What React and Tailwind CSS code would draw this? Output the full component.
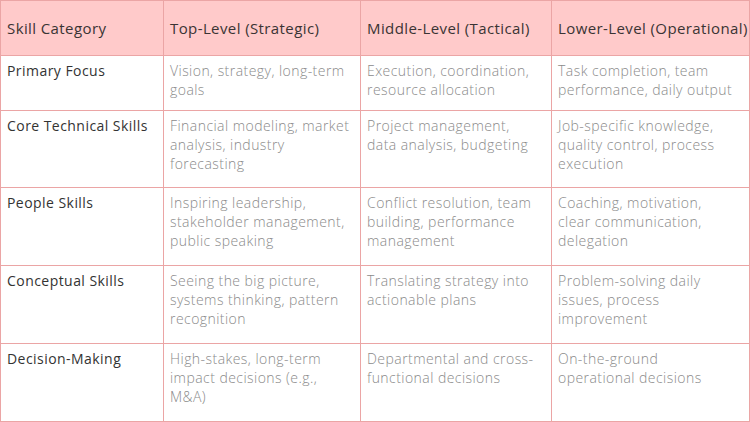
import React from "react";

const rows = [
  {
    h: "h-[55px]",
    cells: [
      ["Primary Focus"],
      ["Vision, strategy, long-term", "goals"],
      ["Execution, coordination,", "resource allocation"],
      ["Task completion, team", "performance, daily output"],
    ],
  },
  {
    h: "h-[77px]",
    cells: [
      ["Core Technical Skills"],
      ["Financial modeling, market", "analysis, industry", "forecasting"],
      ["Project management,", "data analysis, budgeting"],
      ["Job-specific knowledge,", "quality control, process", "execution"],
    ],
  },
  {
    h: "h-[78px]",
    cells: [
      ["People Skills"],
      ["Inspiring leadership,", "stakeholder management,", "public speaking"],
      ["Conflict resolution, team", "building, performance", "management"],
      ["Coaching, motivation,", "clear communication,", "delegation"],
    ],
  },
  {
    h: "h-[78px]",
    cells: [
      ["Conceptual Skills"],
      ["Seeing the big picture,", "systems thinking, pattern", "recognition"],
      ["Translating strategy into", "actionable plans"],
      ["Problem-solving daily", "issues, process", "improvement"],
    ],
  },
  {
    h: "h-[78px]",
    cells: [
      ["Decision-Making"],
      ["High-stakes, long-term", "impact decisions (e.g.,", "M&A)"],
      ["Departmental and cross-", "functional decisions"],
      ["On-the-ground", "operational decisions"],
    ],
  },
];

const headers = [
  "Skill Category",
  "Top-Level (Strategic)",
  "Middle-Level (Tactical)",
  "Lower-Level (Operational)",
];

export default function App() {
  return (
    <div className="w-[750px] h-[422px] bg-white overflow-hidden" style={{ fontFamily: '"Open Sans", "Noto Sans", sans-serif' }}>
      <table className="table-fixed border-collapse w-[749px]">
        <colgroup>
          <col className="w-[163px]" />
          <col className="w-[197px]" />
          <col className="w-[191px]" />
          <col className="w-[198px]" />
        </colgroup>
        <thead>
          <tr className="h-[55px] bg-[#ffcaca]">
            {headers.map((t) => (
              <th
                key={t}
                className="border border-[#eba5a5] px-[6px] text-left align-middle text-[15px] font-medium tracking-[0.4px] text-[#3a3434] whitespace-nowrap"
              >
                {t}
              </th>
            ))}
          </tr>
        </thead>
        <tbody>
          {rows.map((r, i) => (
            <tr key={i} className={r.h}>
              {r.cells.map((lines, j) => (
                <td
                  key={j}
                  className={`border border-[#eba5a5] px-[6px] pt-[5px] align-top text-[14px] leading-[19px] tracking-[0.45px] whitespace-nowrap ${
                    j === 0 ? "text-[#333333] font-normal" : "text-[#8a8a8a] font-light"
                  }`}
                >
                  {lines.map((l, k) => (
                    <div key={k}>{l}</div>
                  ))}
                </td>
              ))}
            </tr>
          ))}
        </tbody>
      </table>
    </div>
  );
}
